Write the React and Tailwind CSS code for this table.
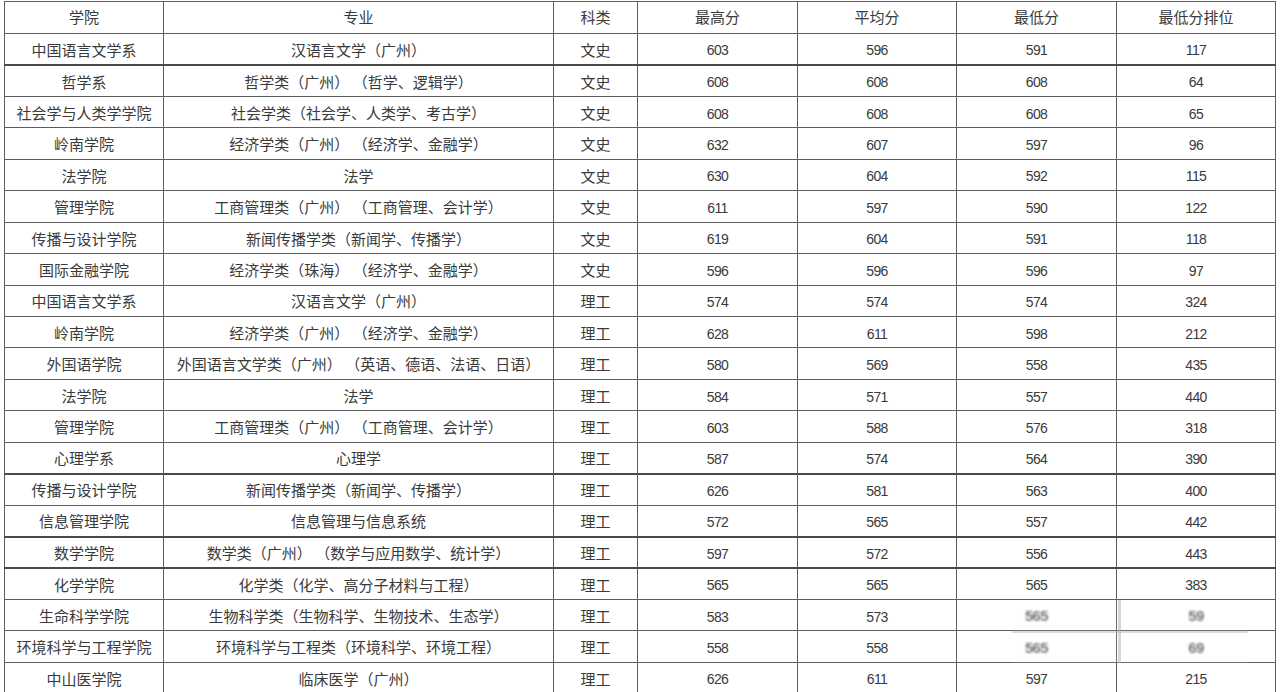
const rows = [
  ["中国语言文学系", "汉语言文学（广州）", "文史", "603", "596", "591", "117"],
  ["哲学系", "哲学类（广州） （哲学、逻辑学）", "文史", "608", "608", "608", "64"],
  ["社会学与人类学学院", "社会学类（社会学、人类学、考古学）", "文史", "608", "608", "608", "65"],
  ["岭南学院", "经济学类（广州） （经济学、金融学）", "文史", "632", "607", "597", "96"],
  ["法学院", "法学", "文史", "630", "604", "592", "115"],
  ["管理学院", "工商管理类（广州） （工商管理、会计学）", "文史", "611", "597", "590", "122"],
  ["传播与设计学院", "新闻传播学类（新闻学、传播学）", "文史", "619", "604", "591", "118"],
  ["国际金融学院", "经济学类（珠海） （经济学、金融学）", "文史", "596", "596", "596", "97"],
  ["中国语言文学系", "汉语言文学（广州）", "理工", "574", "574", "574", "324"],
  ["岭南学院", "经济学类（广州） （经济学、金融学）", "理工", "628", "611", "598", "212"],
  ["外国语学院", "外国语言文学类（广州） （英语、德语、法语、日语）", "理工", "580", "569", "558", "435"],
  ["法学院", "法学", "理工", "584", "571", "557", "440"],
  ["管理学院", "工商管理类（广州） （工商管理、会计学）", "理工", "603", "588", "576", "318"],
  ["心理学系", "心理学", "理工", "587", "574", "564", "390"],
  ["传播与设计学院", "新闻传播学类（新闻学、传播学）", "理工", "626", "581", "563", "400"],
  ["信息管理学院", "信息管理与信息系统", "理工", "572", "565", "557", "442"],
  ["数学学院", "数学类（广州） （数学与应用数学、统计学）", "理工", "597", "572", "556", "443"],
  ["化学学院", "化学类（化学、高分子材料与工程）", "理工", "565", "565", "565", "383"],
  ["生命科学学院", "生物科学类（生物科学、生物技术、生态学）", "理工", "583", "573", "565", "59", true],
  ["环境科学与工程学院", "环境科学与工程类（环境科学、环境工程）", "理工", "558", "558", "565", "69", true],
  ["中山医学院", "临床医学（广州）", "理工", "626", "611", "597", "215"],
];

const thick = [0, 13, 15, 16];
const widths = ["w-[159px]", "w-[390px]", "w-[84px]", "w-[160px]", "w-[159px]", "w-[160px]", "w-[159px]"];
const heads = ["学院", "专业", "科类", "最高分", "平均分", "最低分", "最低分排位"];

function Cell({ children, num, blur }) {
  return (
    <td className="border border-[#5e5e5e] text-center align-middle p-0">
      <span
        className={
          (num ? "font-['Liberation_Sans','Noto_Sans_CJK_SC',sans-serif] tracking-[-0.6px]" : "text-[15px]") +
          (blur ? " text-[15px] blur-[0.8px] text-[#666666] font-bold" : num ? " text-[14px]" : "")
        }
      >
        {children}
      </span>
    </td>
  );
}

export default function App() {
  return (
    <div className="w-[1280px] h-[692px] overflow-hidden bg-white pt-px pl-1 font-['Noto_Sans_CJK_SC',sans-serif] text-[#3a3a3a]">
      <div className="relative w-[1272px]">
        <table className="table-fixed border-collapse w-[1272px]">
          <colgroup>
            {widths.map((w, i) => (
              <col key={i} className={w} />
            ))}
          </colgroup>
          <thead>
            <tr className="h-[32px]">
              {heads.map((h) => (
                <td key={h} className="border border-[#5e5e5e] text-center align-middle p-0 text-[15px]">
                  {h}
                </td>
              ))}
            </tr>
          </thead>
          <tbody>
            {rows.map((r, i) => (
              <tr
                key={i}
                className={"h-[31.45px] " + (thick.includes(i) ? "border-b-2 border-b-[#4a4a4a]" : "")}
              >
                <Cell>{r[0]}</Cell>
                <Cell>{r[1]}</Cell>
                <Cell>{r[2]}</Cell>
                <Cell num>{r[3]}</Cell>
                <Cell num>{r[4]}</Cell>
                <Cell num blur={r[7]}>{r[5]}</Cell>
                <Cell num blur={r[7]}>{r[6]}</Cell>
              </tr>
            ))}
          </tbody>
        </table>
        {/* 水印遮挡 */}
        <div className="absolute left-[1008px] top-[599px] w-[236px] h-[63px] bg-white/10 pointer-events-none">
          <div className="absolute left-[106px] top-0 w-[3px] h-full bg-[#b0b0b0]/50" />
          <div className="absolute left-0 top-[31px] w-full h-[2px] bg-[#b8b8b8]/50" />
        </div>
      </div>
    </div>
  );
}
